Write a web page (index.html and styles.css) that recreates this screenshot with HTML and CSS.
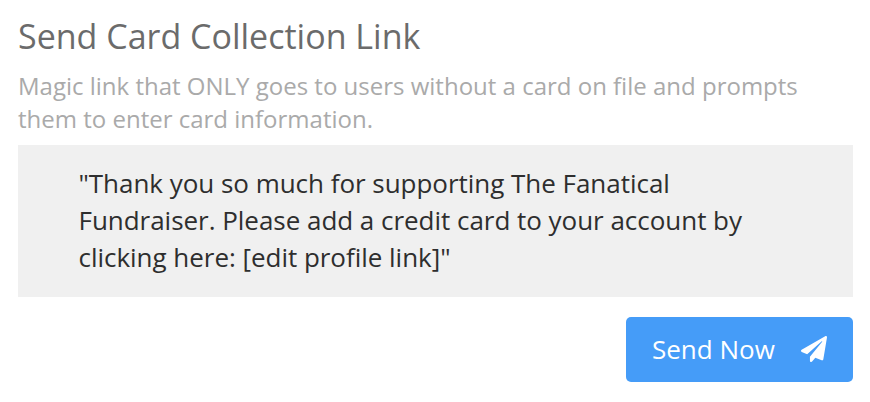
FILE: index.html
```html
<!DOCTYPE html>
<html lang="en">
<head>
<meta charset="utf-8">
<title>Send Card Collection Link</title>
<link rel="stylesheet" href="styles.css">
</head>
<body>
<section class="panel">
  <h2 class="title">Send Card Collection Link</h2>
  <p class="desc">Magic link that ONLY goes to users without a card on file and prompts them to enter card information.</p>
  <blockquote class="quote">"Thank you so much for supporting The Fanatical Fundraiser. Please add a credit card to your account by clicking here: [edit profile link]"</blockquote>
  <div class="actions">
    <button class="send" type="button">
      <span>Send Now</span>
      <svg class="plane" viewBox="0 0 512 512" aria-hidden="true"><path fill="currentColor" d="M476 3.2L12.5 270.6c-18.1 10.4-15.8 35.6 2.2 43.2L121 358.4l287.3-253.2c5.5-4.9 13.3 2.6 8.6 8.3L176 407v80.5c0 23.6 28.5 32.9 42.5 15.8L282 426l124.6 52.2c14.2 6 30.4-2.9 33-18.2l72-432C515 7.8 493.3-6.8 476 3.2z"/></svg>
    </button>
  </div>
</section>
</body>
</html>
```
FILE: styles.css
```css
html, body { margin: 0; padding: 0; background: #fff; }
body { width: 870px; height: 402px; overflow: hidden; font-family: "Open Sans", sans-serif; }
.panel { padding: 15px 17px 0 18px; }
.title { margin: 0; font-size: 34px; line-height: 42px; font-weight: 400; color: #6b6b6b; }
.desc { margin: 12px 0 0; font-size: 24px; line-height: 33px; color: #aaa; }
.quote { margin: 10px 0 0; padding: 20px 60px 21px 60.5px; background: #f0f0f0; font-size: 26px; line-height: 37px; letter-spacing: -0.03px; color: #2e2e2e; }
.actions { display: flex; justify-content: flex-end; margin-top: 20px; }
.send { display: flex; align-items: center; gap: 26px; width: 227px; height: 65px; padding: 0 26px 2px; border: 0; border-radius: 5px; background: #459cf8; color: #fff; font-family: inherit; font-size: 26px; }
.plane { width: 26px; height: 26px; flex: none; }
```
